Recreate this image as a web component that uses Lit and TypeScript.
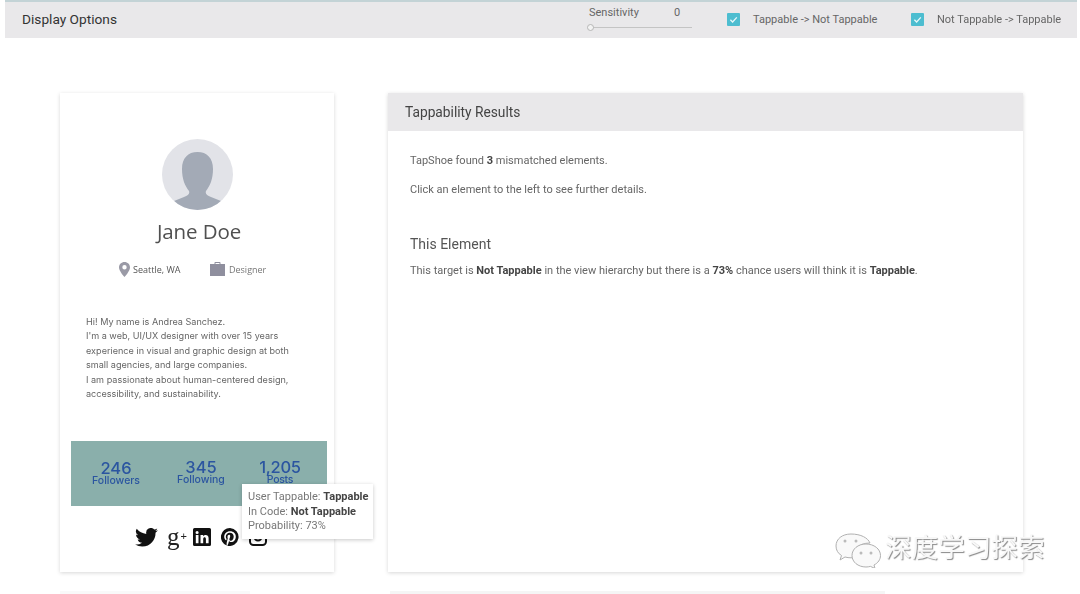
import { LitElement, html, css, svg } from "lit";
import { customElement } from "lit/decorators.js";

const check = svg`<svg class="check" viewBox="0 0 13 13" width="13" height="13"><rect width="13" height="13" rx="1" fill="#4dbdd0"/><path d="M3.4 6.8 5.6 9 9.8 4.4" fill="none" stroke="#e8f8fa" stroke-width="1.3"/></svg>`;

@customElement("app-root")
export class AppRoot extends LitElement {
  static styles = css`
    :host { display: block; width: 1080px; height: 594px; overflow: hidden; background: #fff; position: relative;
      font-family: Roboto, "Liberation Sans", sans-serif; color: #555; }
    .blur { filter: blur(0.45px); height: 594px; position: relative; }
    .toolbar { margin: 0 3px 0 5px; height: 38px; box-sizing: border-box; background: #e9e8ea; border-top: 2px solid #c3d3d6;
      display: flex; align-items: center; padding: 0 17px 2px; white-space: nowrap; }
    .title { font-size: 13.7px; font-weight: 400; color: #333; margin-right: auto; }
    .sens { width: 103px; margin-right: 35px; font-size: 11px; color: #666; align-self: flex-start; padding-top: 4px; }
    .sens-top { display: flex; height: 14px; }
    .sens-top span:first-child { width: 85px; }
    .track { height: 1px; background: #c4c4c4; margin-top: 7px; position: relative; }
    .knob { position: absolute; left: -2px; top: -3px; width: 5px; height: 5px; border: 1px solid #b5b5b5; border-radius: 50%; background: #f3f3f3; }
    .opt { display: flex; align-items: center; gap: 13px; font-size: 11px; color: #666; width: 149px; }
    .opt + .opt { margin-left: 35px; }
    .check { display: block; flex: none; }
    .main { display: flex; padding: 55px 0 0 60px; gap: 54px; align-items: flex-start; }
    .card { box-sizing: border-box; height: 479px; background: #fff; box-shadow: 0 1px 4px rgba(0,0,0,.16); }
    .profile { width: 274px; position: relative; padding: 46px 7px 0 11px; display: flex; flex-direction: column; }
    .avatar { display: block; margin: 0 auto 0 91px; }
    .name { font: 400 20.5px/24px "Open Sans", sans-serif; color: #505050; text-align: center; margin: 9px 0 0 0; letter-spacing: -0.1px; }
    .meta { display: flex; margin-top: 16px; height: 20px; align-items: center; padding-left: 48px; font: 400 9px "Open Sans", sans-serif; color: #555; }
    .meta svg { display: block; flex: none; }
    .seattle { display: flex; align-items: center; gap: 3px; width: 91px; }
    .designer { display: flex; align-items: center; gap: 4px; color: #777; }
    .bio { margin: 36px 0 0 15px; font: 400 9.1px/14.4px Inter, "Open Sans", sans-serif; color: #666; white-space: nowrap; }
    .stats { height: 65px; width: 256px; margin-top: 40px; background: #8aafab; display: flex; align-items: flex-start; color: #2b55a0; text-align: center; }
    .stat { font: 500 16.5px/15px Inter, sans-serif; }
    .stat small { display: block; font: 500 10.5px/10px Inter, sans-serif; }
    .s1 { width: 90px; margin-top: 20px; }
    .s2 { width: 80px; margin-top: 19px; }
    .s3 { width: 78px; margin-top: 19px; letter-spacing: -0.3px; }
    .social { display: flex; align-items: center; height: 24px; margin: 19px 0 0 64px; }
    .social svg { display: block; flex: none; }
    .gplus { display: flex; align-items: center; width: 21px; margin-left: 9px; height: 24px; font: 400 25px/24px "Liberation Serif", serif; color: #222; }
    .gplus small { font: 400 11px/11px "Liberation Sans", sans-serif; margin: -1px 0 0 1px; }
    .tip { position: absolute; left: 182px; top: 391px; width: 131px; height: 55px; box-sizing: border-box; background: #fff;
      box-shadow: 0 1px 4px rgba(0,0,0,.22); padding: 6px 6px 0; font-size: 11px; line-height: 14.6px; color: #777; white-space: nowrap; }
    .tip b, .results b { font-weight: 700; color: #444; }
    .results { width: 635px; }
    .rhead { height: 38px; background: #e9e8ea; display: flex; align-items: center; padding-left: 17px; font-size: 13.75px; font-weight: 400; color: #444; }
    .rbody { padding: 23px 0 0 22px; font-size: 11px; line-height: 14px; color: #666; }
    .rbody p { margin: 0 0 14.8px; }
    .rbody h3 { margin: 39px 0 11px; font-size: 14px; font-weight: 400; line-height: 17px; color: #555; }
    .ghost1, .ghost2 { position: absolute; top: 591px; height: 4px; background: #ececec; }
    .ghost1 { left: 60px; width: 190px; opacity: .3; }
    .ghost2 { left: 390px; width: 495px; opacity: .5; }
    .wm { position: absolute; left: 834px; top: 524px; display: flex; align-items: center; gap: 3px; }
    .wm-text { font: 400 26.6px/34px "Noto Sans CJK SC", sans-serif; color: #f8f8f8;
      text-shadow: 1px 1px 1px #888; white-space: nowrap; }
    .wm svg { margin-top: 8px; }
  `;

  render() {
    return html`<div class="blur">
      <div class="toolbar">
        <div class="title">Display Options</div>
        <div class="sens">
          <div class="sens-top"><span>Sensitivity</span><span>0</span></div>
          <div class="track"><div class="knob"></div></div>
        </div>
        <div class="opt">${check}<span>Tappable -&gt; Not Tappable</span></div>
        <div class="opt">${check}<span>Not Tappable -&gt; Tappable</span></div>
      </div>
      <div class="main">
        <div class="card profile">
          <svg class="avatar" width="71" height="71" viewBox="0 0 71 71">
            <defs><clipPath id="c"><circle cx="35.5" cy="35.5" r="35.5"/></clipPath></defs>
            <circle cx="35.5" cy="35.5" r="35.5" fill="#e2e3e8"/>
            <g clip-path="url(#c)" fill="#a3aab6">
              <path d="M35.500 13C26 13 20 19 20 30 20 40 23 47 27 52 28 55 26 56 22 58L12 62 8 72H63L59 62 49 58C45 56 43 55 44 52 48 47 51 40 51 30 51 19 45 13 35.500 13z"/>
            </g>
          </svg>
          <div class="name">Jane Doe</div>
          <div class="meta">
            <div class="seattle">
              <svg width="11" height="15" viewBox="0 0 11 15"><path fill-rule="evenodd" d="M5.500 0C2.400 0 0 2.400 0 5.400 0 9 5.500 15 5.500 15S11 9 11 5.400C11 2.400 8.600 0 5.500 0zm0 7.500a2.200 2.200 0 1 1 0-4.400 2.200 2.200 0 0 1 0 4.400z" fill="#9a9aa6"/></svg>
              <span>Seattle, WA</span>
            </div>
            <div class="designer">
              <svg width="15" height="14" viewBox="0 0 15 14"><path d="M4.500 2V.8c0-.4.300-.8.800-.8h4.400c.5 0 .8.400.8.800V2H15v12H0V2zm1-.1h4V1h-4z" fill="#8f8f9e" fill-rule="evenodd"/></svg>
              <span>Designer</span>
            </div>
          </div>
          <div class="bio">Hi! My name is Andrea Sanchez.<br>I'm a web, UI/UX designer with over 15 years<br>experience in visual and graphic design at both<br>small agencies, and large companies.<br>I am passionate about human-centered design,<br>accessibility, and sustainability.</div>
          <div class="stats">
            <div class="stat s1">246<small>Followers</small></div>
            <div class="stat s2">345<small>Following</small></div>
            <div class="stat s3">1,205<small>Posts</small></div>
          </div>
          <div class="social">
            <svg width="23" height="19" viewBox="0 0 24 20"><path fill="#111" d="M24 2.400a9.800 9.800 0 0 1-2.800.8A4.900 4.900 0 0 0 23.300.5a9.800 9.800 0 0 1-3.100 1.200A4.900 4.900 0 0 0 11.800 6.200 13.900 13.900 0 0 1 1.700.9a4.900 4.900 0 0 0 1.500 6.600 4.900 4.900 0 0 1-2.200-.6c0 2.400 1.700 4.500 3.900 5a4.900 4.900 0 0 1-2.200.1 4.900 4.900 0 0 0 4.600 3.400A9.900 9.900 0 0 1 0 17.400 13.900 13.900 0 0 0 7.500 19.600c9.100 0 14.300-7.700 14-14.600A10 10 0 0 0 24 2.400z"/></svg>
            <div class="gplus">g<small>+</small></div>
            <svg style="margin-left:5px" width="18" height="18" viewBox="0 0 18 18"><path fill="#111" fill-rule="evenodd" d="M1.500 0h15A1.500 1.500 0 0 1 18 1.500v15a1.500 1.500 0 0 1-1.500 1.500h-15A1.500 1.500 0 0 1 0 16.500v-15A1.500 1.500 0 0 1 1.500 0zM2.800 7v8.200h2.700V7zm1.300-4a1.500 1.500 0 1 0 0 3.100 1.500 1.500 0 0 0 0-3.100zM7.500 7v8.200h2.700v-4.300c0-2.300 2.700-2.400 2.700 0v4.300h2.700v-5c0-3.900-4-3.800-5.400-1.900V7z"/></svg>
            <svg style="margin-left:10px" width="18" height="18" viewBox="0 0 18 18"><path fill="#111" d="M9 0a9 9 0 0 0-3.300 17.400c-.1-.7-.1-1.800 0-2.600l1.100-4.500s-.3-.5-.3-1.300c0-1.300.7-2.200 1.600-2.200.8 0 1.100.6 1.100 1.300 0 .8-.5 1.900-.8 3-.2.900.5 1.600 1.400 1.600 1.600 0 2.900-1.700 2.900-4.200 0-2.200-1.600-3.700-3.800-3.700-2.600 0-4.100 1.900-4.100 3.900 0 .8.300 1.600.7 2.100.1.100.1.200.1.300l-.3 1.100c0 .2-.2.200-.3.100-1.100-.5-1.800-2.200-1.800-3.500 0-2.900 2.100-5.500 6-5.500 3.100 0 5.600 2.200 5.600 5.200 0 3.100-2 5.600-4.700 5.600-.9 0-1.800-.5-2.100-1l-.6 2.200c-.2.800-.8 1.800-1.100 2.400A9 9 0 1 0 9 0z"/></svg>
            <svg style="margin-left:10px" width="18" height="18" viewBox="0 0 18 18"><rect x="1" y="1" width="16" height="16" rx="3.500" fill="none" stroke="#111" stroke-width="2"/><circle cx="9" cy="9" r="3.500" fill="none" stroke="#111" stroke-width="2"/></svg>
          </div>
          <div class="tip">User Tappable: <b>Tappable</b><br>In Code: <b>Not Tappable</b><br>Probability: 73%</div>
        </div>
        <div class="card results">
          <div class="rhead">Tappability Results</div>
          <div class="rbody">
            <p>TapShoe found <b>3</b> mismatched elements.</p>
            <p>Click an element to the left to see further details.</p>
            <h3>This Element</h3>
            <p>This target is <b>Not Tappable</b> in the view hierarchy but there is a <b>73%</b> chance users will think it is <b>Tappable</b>.</p>
          </div>
        </div>
      </div>
      <div class="ghost1"></div><div class="ghost2"></div>
    </div>
    <div class="wm">
      <svg width="48" height="36" viewBox="0 0 48 36" fill="#f9f9f9" stroke="#b0b0b0" stroke-width="1">
        <path d="M17 2C8 2 2 7 2 14c0 4 2 7.500 5.500 9.500L6 28l5-3c2 .6 4 .8 6 .8 1 0 2 0 3-.2C18 19 24 11 36 11 34 6 27 2 17 2z"/>
        <path d="M32 12c-8 0-14 5-14 11.500S24 35 32 35c1.500 0 3-.2 4.500-.6L41 36.500l-1-3.500c4-2 6.500-5.500 6.500-9.500C46.500 17 40 12 32 12z"/>
        <circle cx="11" cy="9" r="1.500" fill="#bbb" stroke="none"/><circle cx="22" cy="9" r="1.500" fill="#bbb" stroke="none"/>
        <circle cx="27" cy="21" r="1.500" fill="#bbb" stroke="none"/><circle cx="37" cy="21" r="1.500" fill="#bbb" stroke="none"/>
      </svg>
      <span class="wm-text">深度学习探索</span>
    </div>`;
  }
}
